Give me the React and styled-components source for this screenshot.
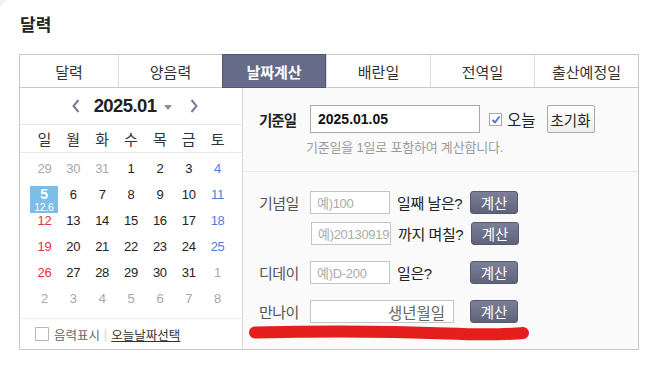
import React from "react";
import styled, { createGlobalStyle, css } from "styled-components";

const GlobalStyle = createGlobalStyle`
  body {
    margin: 0;
    background: #f1f1f1;
    font-family: "Liberation Sans", "Noto Sans CJK KR", sans-serif;
    color: #222;
  }
  * { box-sizing: border-box; }
`;

const Page = styled.div`
  background: #fff;
  border-top-left-radius: 10px;
  min-height: 365px;
  padding: 15px 0 0 19px;
`;

const Title = styled.h2`
  margin: 0 0 0 1px;
  height: 39px;
  font-size: 17px;
  line-height: 22px;
  font-weight: bold;
  color: #222;
`;

const Box = styled.div`
  width: 620px;
  border: 1px solid #c9c9c9;
  background: #fff;
`;

const Tabs = styled.div`
  display: grid;
  grid-template-columns: 98px repeat(5, 1fr);
  height: 33px;
  border-bottom: 1px solid #c9c9c9;
`;

const Tab = styled.div`
  display: flex;
  align-items: center;
  justify-content: center;
  font-size: 15px;
  color: #333;
  border-left: 1px solid #dcdcdc;
  &:first-child { border-left: none; }
  ${({ $active }) =>
    $active &&
    css`
      background: #656b88;
      color: #fff;
      font-weight: bold;
      border: 1px solid #4f5573;
      margin: -1px 0 -1px 0;
    `}
`;

const Body = styled.div`
  display: grid;
  grid-template-columns: 223px 1fr;
`;

/* ---------- calendar ---------- */

const CalPanel = styled.div`
  border-right: 1px solid #d9d9d9;
`;

const CalHeader = styled.div`
  height: 37px;
  display: flex;
  align-items: center;
  justify-content: center;
  padding-left: 8px;
  border-bottom: 1px solid #e6e6e6;
`;

const MonthTitle = styled.span`
  font-size: 18.5px;
  font-weight: bold;
  color: #222;
  letter-spacing: -0.6px;
  margin: 0 8px 0 14px;
`;

const Arrow = styled.svg`
  width: 8px;
  height: 14px;
  & polyline {
    fill: none;
    stroke: #767b96;
    stroke-width: 2;
  }
`;

const Caret = styled.span`
  width: 0;
  height: 0;
  border-left: 4px solid transparent;
  border-right: 4px solid transparent;
  border-top: 5px solid #888ca3;
  margin: 2px 18px 0 0;
`;

const WeekRow = styled.div`
  display: grid;
  grid-template-columns: repeat(7, 1fr);
  padding: 0 10px;
  height: 28px;
  align-items: center;
  border-bottom: 1px solid #e8e8e8;
`;

const WeekDay = styled.span`
  text-align: center;
  font-size: 15px;
  color: #333;
`;

const DayGrid = styled.div`
  display: grid;
  grid-template-columns: repeat(7, 1fr);
  grid-auto-rows: 26px;
  padding: 3px 10px 6px;
  border-bottom: 1px solid #ececec;
`;

const dayColors = {
  muted: "#a8a8a8",
  sun: "#e3323c",
  sat: "#4c7fd6",
  normal: "#222",
};

const Day = styled.div`
  display: flex;
  justify-content: center;
  padding-top: 4px;
  font-size: 13px;
  line-height: 18px;
  letter-spacing: -0.3px;
  color: ${({ $tone }) => dayColors[$tone]};
`;

const Selected = styled.div`
  width: 28px;
  height: 27px;
  margin-left: -1px;
  background: #7dbde9;
  color: #fff;
  display: flex;
  flex-direction: column;
  align-items: center;
  z-index: 1;
  & b {
    font-size: 14px;
    line-height: 17px;
  }
  & small {
    font-size: 10.5px;
    line-height: 9px;
  }
`;

const CalFooter = styled.div`
  height: 30px;
  display: flex;
  align-items: center;
  padding-left: 15px;
  font-size: 12.5px;
  color: #666;
`;

const Square = styled.span`
  width: 14px;
  height: 14px;
  border: 1px solid #b8b8b8;
  background: #fff;
  margin-right: 5px;
`;

const Divider = styled.span`
  color: #efcaca;
  margin: 0 4px;
`;

const TodayLink = styled.span`
  color: #333;
  text-decoration: underline;
`;

/* ---------- calculator ---------- */

const CalcPanel = styled.div`
  position: relative;
  background: #fafafa;
`;

const BaseSection = styled.div`
  height: 84px;
  padding: 17px 0 0 16px;
  border-bottom: 1px solid #e8e8e8;
`;

const Row = styled.div`
  display: flex;
  align-items: center;
  height: ${({ $h }) => $h || 23}px;
  margin-top: ${({ $gap }) => $gap || 0}px;
  padding-left: ${({ $shift }) => $shift || 0}px;
`;

const Label = styled.span`
  width: 51px;
  flex: none;
  font-size: ${({ $bold }) => ($bold ? 14.5 : 15)}px;
  letter-spacing: ${({ $bold }) => ($bold ? "-1px" : "-0.6px")};
  font-weight: ${({ $bold }) => ($bold ? "bold" : "normal")};
  color: ${({ $bold }) => ($bold ? "#222" : "#555")};
`;

const DateInput = styled.div`
  width: 170px;
  height: 28px;
  border: 1px solid #a9a9a9;
  background: #fff;
  display: flex;
  align-items: center;
  padding-left: 7px;
  font-size: 14px;
  font-weight: bold;
  color: #111;
`;

const Check = styled.span`
  width: 13px;
  height: 13px;
  margin: 0 5px 0 9px;
  border: 1px solid #a9a9a9;
  background: #fff;
  display: flex;
  align-items: center;
  justify-content: center;
`;

const TodayText = styled.span`
  font-size: 15.5px;
  color: #222;
  margin-right: 11px;
`;

const ResetButton = styled.span`
  width: 48px;
  height: 28px;
  border: 1px solid #a9a9a9;
  border-radius: 2px;
  background: linear-gradient(#ffffff, #eeeeee);
  display: flex;
  align-items: center;
  justify-content: center;
  font-size: 14.5px;
  color: #222;
`;

const Hint = styled.div`
  margin: 7px 0 0 47px;
  font-size: 13px;
  line-height: 16px;
  letter-spacing: -0.2px;
  color: #9a9a9a;
`;

const CalcSection = styled.div`
  padding: 19px 0 0 16px;
`;

const Field = styled.div`
  width: ${({ $w }) => $w || 80}px;
  height: 23px;
  flex: none;
  border: 1px solid #c4c4c4;
  background: #fff;
  display: flex;
  align-items: center;
  justify-content: ${({ $right }) => ($right ? "flex-end" : "flex-start")};
  padding: ${({ $right }) => ($right ? "0 8px 0 7px" : "0 0 0 6px")};
  font-size: ${({ $right }) => ($right ? 15.5 : 13)}px;
  letter-spacing: ${({ $right }) => ($right ? 0 : -0.3)}px;
  white-space: nowrap;
  overflow: hidden;
  color: ${({ $right }) => ($right ? "#666" : "#aaa")};
  margin-right: ${({ $right }) => ($right ? 16 : 0)}px;
`;

const Desc = styled.span`
  width: 80px;
  flex: none;
  padding-left: 7px;
  font-size: 15px;
  color: #222;
  letter-spacing: -0.4px;
  white-space: nowrap;
`;

const CalcButton = styled.span`
  width: 48px;
  height: 23px;
  border: 1px solid #555a70;
  border-radius: 3px;
  background: linear-gradient(#7b7f98, #5e627a);
  display: flex;
  align-items: center;
  justify-content: center;
  font-size: 14.5px;
  color: #fff;
`;

const Scribble = styled.svg`
  position: absolute;
  left: 4px;
  top: 236px;
  width: 284px;
  height: 18px;
  pointer-events: none;
`;

const weekDays = ["일", "월", "화", "수", "목", "금", "토"];

const days = [
  [29, "muted"], [30, "muted"], [31, "muted"], [1, "normal"], [2, "normal"], [3, "normal"], [4, "sat"],
  [5, "sel"], [6, "normal"], [7, "normal"], [8, "normal"], [9, "normal"], [10, "normal"], [11, "sat"],
  [12, "sun"], [13, "normal"], [14, "normal"], [15, "normal"], [16, "normal"], [17, "normal"], [18, "sat"],
  [19, "sun"], [20, "normal"], [21, "normal"], [22, "normal"], [23, "normal"], [24, "normal"], [25, "sat"],
  [26, "sun"], [27, "normal"], [28, "normal"], [29, "normal"], [30, "normal"], [31, "normal"], [1, "muted"],
  [2, "muted"], [3, "muted"], [4, "muted"], [5, "muted"], [6, "muted"], [7, "muted"], [8, "muted"],
];

const tabs = ["달력", "양음력", "날짜계산", "배란일", "전역일", "출산예정일"];

export default function App() {
  return (
    <>
      <GlobalStyle />
      <Page>
        <Title>달력</Title>
        <Box>
          <Tabs>
            {tabs.map((t) => (
              <Tab key={t} $active={t === "날짜계산"}>
                {t}
              </Tab>
            ))}
          </Tabs>
          <Body>
            <CalPanel>
              <CalHeader>
                <Arrow viewBox="0 0 8 14">
                  <polyline points="6.5,1 1.5,7 6.5,13" />
                </Arrow>
                <MonthTitle>2025.01</MonthTitle>
                <Caret />
                <Arrow viewBox="0 0 8 14">
                  <polyline points="1.5,1 6.5,7 1.5,13" />
                </Arrow>
              </CalHeader>
              <WeekRow>
                {weekDays.map((w) => (
                  <WeekDay key={w}>{w}</WeekDay>
                ))}
              </WeekRow>
              <DayGrid>
                {days.map(([n, tone], i) =>
                  tone === "sel" ? (
                    <Day key={i} $tone="normal">
                      <Selected>
                        <b>{n}</b>
                        <small>12.6</small>
                      </Selected>
                    </Day>
                  ) : (
                    <Day key={i} $tone={tone}>
                      {n}
                    </Day>
                  )
                )}
              </DayGrid>
              <CalFooter>
                <Square />
                음력표시
                <Divider>|</Divider>
                <TodayLink>오늘날짜선택</TodayLink>
              </CalFooter>
            </CalPanel>

            <CalcPanel>
              <BaseSection>
                <Row $h={28}>
                  <Label $bold>기준일</Label>
                  <DateInput>2025.01.05</DateInput>
                  <Check>
                    <svg width="10" height="9" viewBox="0 0 10 9">
                      <polyline points="1.5,5 4,7.5 8.5,1.5" fill="none" stroke="#4a6fe0" strokeWidth="1.8" />
                    </svg>
                  </Check>
                  <TodayText>오늘</TodayText>
                  <ResetButton>초기화</ResetButton>
                </Row>
                <Hint>기준일을 1일로 포함하여 계산합니다.</Hint>
              </BaseSection>

              <CalcSection>
                <Row>
                  <Label>기념일</Label>
                  <Field>예)100</Field>
                  <Desc>일째 날은?</Desc>
                  <CalcButton>계산</CalcButton>
                </Row>
                <Row $gap={8} $shift={1}>
                  <Label />
                  <Field>예)20130919</Field>
                  <Desc>까지 며칠?</Desc>
                  <CalcButton>계산</CalcButton>
                </Row>
                <Row $gap={16}>
                  <Label>디데이</Label>
                  <Field>예)D-200</Field>
                  <Desc>일은?</Desc>
                  <CalcButton>계산</CalcButton>
                </Row>
                <Row $gap={16}>
                  <Label>만나이</Label>
                  <Field $w={144} $right>
                    생년월일
                  </Field>
                  <CalcButton>계산</CalcButton>
                </Row>
              </CalcSection>

              <Scribble viewBox="0 0 284 18">
                <path
                  d="M8 8.5 C 70 7, 150 7.5, 200 9.5 S 260 10, 276 9"
                  fill="none"
                  stroke="#e41d1d"
                  strokeWidth="12"
                  strokeLinecap="round"
                />
              </Scribble>
            </CalcPanel>
          </Body>
        </Box>
      </Page>
    </>
  );
}
